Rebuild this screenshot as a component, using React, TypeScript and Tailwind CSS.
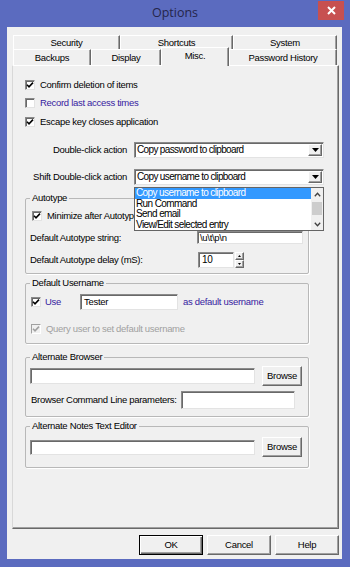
import type { ReactNode } from "react";

const sunken =
  "bg-white border border-t-[#8a8a8a] border-l-[#8a8a8a] border-r-[#e3e3e3] border-b-[#e3e3e3] shadow-[inset_1px_1px_0_#696969]";
const raised =
  "bg-[#f0f0f0] border border-t-white border-l-white border-r-[#696969] border-b-[#696969] shadow-[inset_-1px_-1px_0_#a0a0a0]";

function CheckBox({ checked, disabled }: { checked?: boolean; disabled?: boolean }) {
  return (
    <span
      className={`flex h-[10px] w-[10px] shrink-0 items-center justify-center ${
        disabled
          ? "border border-t-[#a0a0a0] border-l-[#a0a0a0] border-r-white border-b-white bg-[#f0f0f0]"
          : sunken
      }`}
    >
      {checked && (
        <svg width="8" height="8" viewBox="0 0 8 8">
          <path d="M1 3.8 L3 5.8 L7 1.6" fill="none" stroke={disabled ? "#a0a0a0" : "#000"} strokeWidth="1.6" />
        </svg>
      )}
    </span>
  );
}

function CheckRow({ label, checked, disabled, className, labelClass }: {
  label: string;
  checked?: boolean;
  disabled?: boolean;
  className?: string;
  labelClass?: string;
}) {
  return (
    <div className={`flex h-[12px] items-center gap-[5px] ${className ?? ""}`}>
      <CheckBox checked={checked} disabled={disabled} />
      <span className={`whitespace-nowrap ${labelClass ?? ""}`}>{label}</span>
    </div>
  );
}

function GroupBox({ title, className, children }: { title: string; className?: string; children: ReactNode }) {
  return (
    <fieldset className={`w-[284px] rounded-[2px] border border-[#b8b8b8] shadow-[1px_1px_0_white] ${className ?? ""}`}>
      <legend className="ml-[4px] px-[2px] leading-[12px]">{title}</legend>
      {children}
    </fieldset>
  );
}

function Combo({ value }: { value: string }) {
  return (
    <div className={`flex h-[16px] w-[190px] items-center ${sunken}`}>
      <span className="flex-1 whitespace-nowrap pl-[2px] text-[10px] tracking-[-0.65px]">{value}</span>
      <span className={`mr-[1px] flex h-[12px] w-[14px] items-center justify-center ${raised}`}>
        <svg width="7" height="4" viewBox="0 0 7 4">
          <path d="M0 0h7L3.5 4z" fill="#000" />
        </svg>
      </span>
    </div>
  );
}

function DropList() {
  const items = ["Run Command", "Send email", "View/Edit selected entry"];
  return (
    <div className="absolute left-0 top-[18px] z-20 flex h-[44px] w-[190px] border border-[#646464] bg-white text-[10px] tracking-[-0.6px]">
      <div className="flex flex-1 flex-col">
        <div className="h-[10.5px] whitespace-nowrap bg-[#3399ff] pl-[1px] leading-[10.5px] text-white">
          Copy username to clipboard
        </div>
        {items.map((t) => (
          <div key={t} className="h-[10.5px] whitespace-nowrap pl-[1px] leading-[10.5px]">
            {t}
          </div>
        ))}
      </div>
      <div className="flex w-[12px] flex-col bg-[#f0f0f0]">
        <div className="flex h-[12px] items-center justify-center">
          <svg width="7" height="5" viewBox="0 0 7 5">
            <path d="M0.8 4.2L3.5 1.2L6.2 4.2" fill="none" stroke="#404040" strokeWidth="1.3" />
          </svg>
        </div>
        <div className="mx-[1px] mt-[2px] h-[13px] bg-[#cdcdcd]" />
        <div className="flex-1" />
        <div className="flex h-[12px] items-center justify-center">
          <svg width="7" height="5" viewBox="0 0 7 5">
            <path d="M0.8 0.8L3.5 3.8L6.2 0.8" fill="none" stroke="#404040" strokeWidth="1.3" />
          </svg>
        </div>
      </div>
    </div>
  );
}

function Tab({ label, className, active }: { label: string; className: string; active?: boolean }) {
  return (
    <div
      className={`flex justify-center border-l border-r border-t border-l-white border-r-[#696969] border-t-white bg-[#f0f0f0] shadow-[inset_-1px_0_0_#a0a0a0] ${
        active ? "relative z-10 -mb-[1px] h-[19px] items-start pt-[2px]" : "items-center"
      } ${className}`}
    >
      {label}
    </div>
  );
}

function Button({ label, isDefault, className }: { label: string; isDefault?: boolean; className?: string }) {
  return (
    <button
      className={`flex items-center justify-center bg-[#f0f0f0] ${
        isDefault
          ? "border border-black shadow-[inset_1px_1px_0_white,inset_-1px_-1px_0_#696969,inset_-2px_-2px_0_#a0a0a0]"
          : raised
      } ${className ?? ""}`}
    >
      {label}
    </button>
  );
}

export default function App() {
  return (
    <div className="flex h-[567px] w-[350px] flex-col bg-[#5b6bbf] font-['Liberation_Sans',Arial,sans-serif] text-[9.5px] leading-[12px] tracking-[-0.3px] text-black">
      {/* title bar */}
      <div className="grid h-[27px] grid-cols-[1fr_auto_1fr] items-start">
        <div />
        <div className="pt-[5px] font-['Open_Sans',sans-serif] text-[12.5px] leading-[16px] tracking-normal text-[#25254a]">
          Options
        </div>
        <div className="flex justify-end pr-[6px] pt-[1px]">
          <div className="flex h-[19px] w-[26px] items-center justify-center bg-[#c75050]">
            <svg width="9" height="9" viewBox="0 0 9 9">
              <path d="M1 1L8 8M8 1L1 8" stroke="white" strokeWidth="2" />
            </svg>
          </div>
        </div>
      </div>

      {/* client */}
      <div className="ml-[7px] flex h-[532px] w-[335px] flex-col bg-[#f0f0f0] pl-[5px] pt-[8px]">
        <div className="ml-[1px] flex h-[14px] w-[324px]">
          <Tab label="Security" className="w-[107px]" />
          <Tab label="Shortcuts" className="w-[113px]" />
          <Tab label="System" className="w-[104px]" />
        </div>
        <div className="ml-[1px] flex h-[16px] w-[324px] items-end">
          <Tab label="Backups" className="h-[16px] w-[78px]" />
          <Tab label="Display" className="h-[16px] w-[70px]" />
          <Tab label="Misc." className="w-[68px]" active />
          <Tab label="Password History" className="h-[16px] w-[108px]" />
        </div>

        {/* tab page */}
        <div className="flex h-[464px] w-[327px] flex-col border border-b-[#696969] border-l-[#d8d8d8] border-r-[#696969] border-t-white shadow-[inset_-1px_-1px_0_#a0a0a0]">
          <CheckRow className="ml-[12px] mt-[13px]" label="Confirm deletion of items" checked />
          <CheckRow className="ml-[12px] mt-[6px]" label="Record last access times" labelClass="text-[#3621a0]" />
          <CheckRow className="ml-[12px] mt-[7px]" label="Escape key closes application" checked />

          <div className="mt-[14px] flex h-[16px] items-center">
            <span className="w-[114px] text-right">Double-click action</span>
            <div className="ml-[7px]">
              <Combo value="Copy password to clipboard" />
            </div>
          </div>
          <div className="mt-[11px] flex h-[16px] items-center">
            <span className="w-[114px] text-right">Shift Double-click action</span>
            <div className="relative ml-[7px]">
              <Combo value="Copy username to clipboard" />
              <DropList />
            </div>
          </div>

          <GroupBox title="Autotype" className="ml-[12px] mt-[7px] pb-[5px]">
            <CheckRow className="ml-[6px] mt-[6px]" label="Minimize after Autotype" checked />
            <div className="mt-[9px] flex h-[13px] items-center">
              <span className="ml-[4px] w-[167px]">Default Autotype string:</span>
              <div className={`flex h-[13px] w-[106px] items-center pl-[2px] ${sunken}`}>{"\\u\\t\\p\\n"}</div>
            </div>
            <div className="mt-[8px] flex h-[16px] items-center">
              <span className="ml-[4px] w-[168px]">Default Autotype delay (mS):</span>
              <div className={`flex h-[16px] w-[36px] items-center pl-[3px] text-[10px] ${sunken}`}>10</div>
              <div className="ml-[1px] flex h-[16px] w-[9px] flex-col">
                <div className={`flex h-[8px] items-center justify-center ${raised}`}>
                  <svg width="3" height="2" viewBox="0 0 3 2">
                    <path d="M0 2h3L1.5 0z" fill="#000" />
                  </svg>
                </div>
                <div className={`flex h-[8px] items-center justify-center ${raised}`}>
                  <svg width="3" height="2" viewBox="0 0 3 2">
                    <path d="M0 0h3L1.5 2z" fill="#000" />
                  </svg>
                </div>
              </div>
            </div>
          </GroupBox>

          <GroupBox title="Default Username" className="ml-[12px] mt-[3px] pb-[8px]">
            <div className="ml-[5px] mt-[5px] flex h-[16px] items-center">
              <CheckBox checked />
              <span className="ml-[4px] w-[35px] text-[#3621a0]">Use</span>
              <div className={`flex h-[16px] w-[98px] items-center pl-[3px] ${sunken}`}>Tester</div>
              <span className="ml-[5px] text-[#3621a0]">as default username</span>
            </div>
            <CheckRow
              className="ml-[5px] mt-[13px]"
              label="Query user to set default username"
              checked
              disabled
              labelClass="text-[#a0a0a0]"
            />
          </GroupBox>

          <GroupBox title="Alternate Browser" className="ml-[12px] mt-[7px] pb-[7px]">
            <div className="mt-[3px] flex h-[20px] items-center">
              <div className={`ml-[4px] h-[16px] w-[225px] ${sunken}`} />
              <Button label="Browse" className="ml-[7px] h-[20px] w-[40px]" />
            </div>
            <div className="mt-[5px] flex h-[18px] items-center">
              <span className="ml-[5px] w-[150px] whitespace-nowrap">Browser Command Line parameters:</span>
              <div className={`h-[18px] w-[114px] ${sunken}`} />
            </div>
          </GroupBox>

          <GroupBox title="Alternate Notes Text Editor" className="ml-[12px] mt-[3px] pb-[10px]">
            <div className="mt-[5px] flex h-[20px] items-center">
              <div className={`ml-[4px] h-[15px] w-[225px] ${sunken}`} />
              <Button label="Browse" className="ml-[7px] h-[20px] w-[40px]" />
            </div>
          </GroupBox>
        </div>

        <div className="mt-[6px] flex w-[327px] justify-end gap-[4px]">
          <Button label="OK" isDefault className="h-[20px] w-[64px]" />
          <Button label="Cancel" className="h-[20px] w-[64px]" />
          <Button label="Help" className="h-[20px] w-[64px]" />
        </div>
      </div>
    </div>
  );
}
